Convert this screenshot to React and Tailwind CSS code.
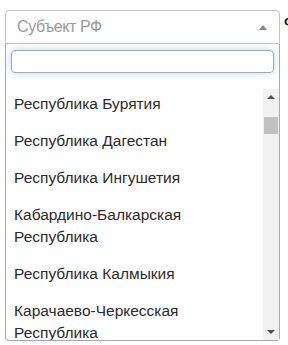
import React from "react";

const regions = [
  "Республика Бурятия",
  "Республика Дагестан",
  "Республика Ингушетия",
  "Кабардино-Балкарская Республика",
  "Республика Калмыкия",
  "Карачаево-Черкесская Республика",
  "Республика Карелия",
];

const App = () => {
  return (
    <div
      className="w-[288px] h-[345px] overflow-hidden bg-white pt-[10px] pl-[5px]"
      style={{ fontFamily: '"Liberation Sans", Arial, sans-serif' }}
    >
      <div className="flex items-start gap-[4px]">
        {/* Select */}
        <div className="w-[275px] shrink-0">
          {/* Header */}
          <div className="h-[34px] border border-[#c4c4c4] rounded-t-[4px] flex items-center justify-between pl-[11px] pr-[12px]">
            <span className="font-['Liberation_Sans_Narrow','Arial_Narrow',sans-serif] text-[16px] tracking-[-0.4px] text-[#9a9a9a]">
              Субъект РФ
            </span>
            <span className="w-0 h-0 border-x-[4px] border-x-transparent border-b-[5px] border-b-[#888]" />
          </div>

          {/* Dropdown */}
          <div className="h-[297px] border-x border-b border-[#aaa] rounded-b-[4px] flex flex-col">
            <div className="px-[5px] pt-[6px]">
              <div className="h-[23px] border border-[#a9a9a9] rounded-[4px] bg-white shadow-[0_0_8px_rgba(102,175,233,0.45)]" />
            </div>

            {/* Results list */}
            <div className="mt-[16px] flex-1 flex overflow-hidden">
              <div className="flex-1 overflow-hidden">
                <ul className="-mt-[3.5px]">
                  {regions.map((r) => (
                    <li
                      key={r}
                      className="pl-[8px] pr-[6px] py-[7.5px] text-[15.5px] leading-[22px] text-[#2b2b2b]"
                    >
                      {r}
                    </li>
                  ))}
                </ul>
              </div>

              {/* Scrollbar */}
              <div className="w-[16px] bg-[#f1f1f1] flex flex-col items-center">
                <div className="h-[16px] flex items-center justify-center">
                  <span className="w-0 h-0 border-x-[4px] border-x-transparent border-b-[4px] border-b-[#505050]" />
                </div>
                <div className="flex-1 w-full px-[1px] pt-[12px]">
                  <div className="h-[17px] bg-[#c1c1c1]" />
                </div>
                <div className="h-[16px] flex items-center justify-center">
                  <span className="w-0 h-0 border-x-[4px] border-x-transparent border-t-[4px] border-t-[#505050]" />
                </div>
              </div>
            </div>
          </div>
        </div>

        <span className="mt-[5px] text-[14px] font-bold text-[#222] leading-none">Ф</span>
      </div>
    </div>
  );
};

export default App;
